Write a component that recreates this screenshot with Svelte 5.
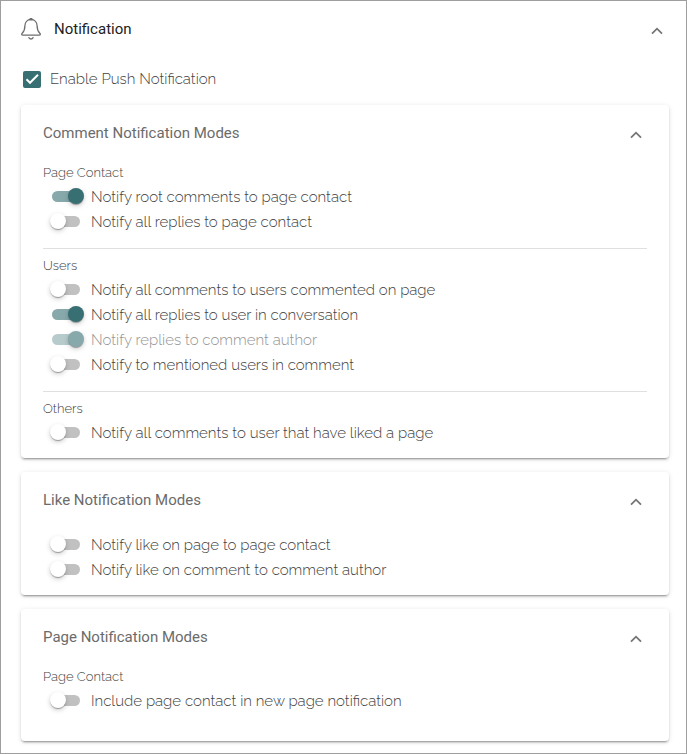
<script>
  let open = $state(true);
  let push = $state(true);

  let panels = $state([
    {
      title: 'Comment Notification Modes',
      open: true,
      groups: [
        {
          label: 'Page Contact',
          options: [
            { text: 'Notify root comments to page contact', on: true },
            { text: 'Notify all replies to page contact', on: false }
          ]
        },
        {
          label: 'Users',
          options: [
            { text: 'Notify all comments to users commented on page', on: false },
            { text: 'Notify all replies to user in conversation', on: true },
            { text: 'Notify replies to comment author', on: true, disabled: true },
            { text: 'Notify to mentioned users in comment', on: false }
          ]
        },
        {
          label: 'Others',
          options: [{ text: 'Notify all comments to user that have liked a page', on: false }]
        }
      ]
    },
    {
      title: 'Like Notification Modes',
      open: true,
      groups: [
        {
          options: [
            { text: 'Notify like on page to page contact', on: false },
            { text: 'Notify like on comment to comment author', on: false }
          ]
        }
      ]
    },
    {
      title: 'Page Notification Modes',
      open: true,
      roomy: true,
      groups: [
        {
          label: 'Page Contact',
          options: [{ text: 'Include page contact in new page notification', on: false }]
        }
      ]
    }
  ]);
</script>

{#snippet chevron(up)}
  <svg class="chevron" class:down={!up} width="12" height="8" viewBox="0 0 12 8" aria-hidden="true">
    <path d="M1 6.7 6 1.7l5 5" fill="none" stroke="#757575" stroke-width="1.8" />
  </svg>
{/snippet}

<main class="settings">
  <h1>
    <button class="header main-header" aria-expanded={open} onclick={() => (open = !open)}>
      <svg class="bell" width="20" height="22" viewBox="0 0 20 22" fill="none" stroke="#6e6e6e" stroke-width="1.3" aria-hidden="true">
        <path d="M8.7 1.4a1.4 1.4 0 0 1 2.6 0" />
        <path d="M10 1.500c-3.700 0-6.100 2.800-6.100 6.300 0 3.900-.5 5.500-2.700 7.500-.9.900-.6 1.800.6 1.800h16.400c1.200 0 1.500-.9.600-1.800-2.200-2-2.700-3.600-2.700-7.500 0-3.500-2.400-6.300-6.100-6.300z" stroke-linejoin="round" />
        <path d="M7.700 19.100c.2 1.200 1.100 1.900 2.300 1.900s2.100-.7 2.300-1.900" />
      </svg>
      <span class="title">Notification</span>
      {@render chevron(open)}
    </button>
  </h1>

  {#if open}
    <label class="push">
      <span class="check">
        <input type="checkbox" bind:checked={push} />
        <svg width="18" height="17" viewBox="0 0 18 17" aria-hidden="true">
          <path d="M3.500 8.300 7 11.800l8-8" fill="none" stroke="#fff" stroke-width="2" />
        </svg>
      </span>
      Enable Push Notification
    </label>

    <div class="panels">
      {#each panels as panel}
        <section class="panel">
          <h2>
            <button class="header" aria-expanded={panel.open} onclick={() => (panel.open = !panel.open)}>
              <span class="title">{panel.title}</span>
              {@render chevron(panel.open)}
            </button>
          </h2>
          {#if panel.open}
            <div class="body" class:roomy={panel.roomy}>
              {#each panel.groups as group}
                <div class="group" class:plain={!group.label} role="group" aria-label={group.label}>
                  {#if group.label}<h3>{group.label}</h3>{/if}
                  {#each group.options as option}
                    <label class="option" class:disabled={option.disabled}>
                      <input type="checkbox" role="switch" bind:checked={option.on} disabled={option.disabled} />
                      <span>{option.text}</span>
                    </label>
                  {/each}
                </div>
              {/each}
            </div>
          {/if}
        </section>
      {/each}
    </div>
  {/if}
</main>

<style>
  :global(body) {
    margin: 0;
    background: #fff;
  }

  .settings {
    box-sizing: border-box;
    border: 1px solid #9e9e9e;
    padding-bottom: 12px;
    font-family: Raleway, Lato, 'Open Sans', sans-serif;
    font-size: 15px;
    font-weight: 300;
    color: #424242;
  }

  h1,
  h2,
  h3 {
    margin: 0;
    font-weight: 300;
  }

  .header {
    display: flex;
    align-items: center;
    width: 100%;
    height: 56px;
    padding: 0 27px 0 22px;
    border: 0;
    background: none;
    color: #6b6b6b;
    font: 400 15px/20px Roboto, sans-serif;
    text-align: left;
    cursor: pointer;
  }

  .main-header {
    padding: 0 23px 0 20px;
    color: #212121;
  }

  .bell {
    margin-right: 13px;
  }

  .title {
    flex: 1;
  }

  .chevron {
    margin-top: 4px;
  }

  .chevron.down {
    transform: rotate(180deg);
  }

  .push {
    display: flex;
    align-items: center;
    gap: 9px;
    height: 44px;
    margin: 0 22px 4px;
    cursor: pointer;
  }

  .check {
    display: grid;
  }

  .check input,
  .check svg {
    grid-area: 1 / 1;
  }

  .check input {
    appearance: none;
    width: 18px;
    height: 17px;
    margin: 0;
    border: 2px solid #757575;
    border-radius: 2px;
  }

  .check input:checked {
    border-color: #376f73;
    background: #376f73;
  }

  .check svg {
    pointer-events: none;
  }

  .panels {
    display: flex;
    flex-direction: column;
    gap: 14px;
    margin: 0 17px 0 20px;
  }

  .panel {
    border-radius: 4px;
    background: #fff;
    box-shadow:
      0 3px 1px -2px rgba(0, 0, 0, 0.2),
      0 2px 2px 0 rgba(0, 0, 0, 0.14),
      0 1px 5px 0 rgba(0, 0, 0, 0.12);
  }

  .body {
    padding: 0 22px 13px;
  }

  .roomy {
    padding-bottom: 28px;
  }

  .group + .group {
    margin-top: 14px;
    padding-top: 5px;
    border-top: 1px solid #e0e0e0;
  }

  .plain {
    padding-top: 4px;
  }

  h3 {
    font-size: 13px;
    line-height: 23px;
  }

  .option {
    display: flex;
    align-items: center;
    gap: 11px;
    height: 25px;
    padding-left: 9px;
    cursor: pointer;
  }

  .option input {
    appearance: none;
    display: flex;
    align-items: center;
    flex: none;
    width: 28px;
    height: 11px;
    margin: 0 0 1px;
    border-radius: 6px;
    background: #c1c1c1;
  }

  .option input::before {
    content: '';
    flex: none;
    width: 16px;
    height: 16px;
    margin-left: -2px;
    border-radius: 50%;
    background: #fff;
    box-shadow:
      0 2px 1px -1px rgba(0, 0, 0, 0.2),
      0 1px 1px 0 rgba(0, 0, 0, 0.14),
      0 2px 5px 0 rgba(0, 0, 0, 0.2);
  }

  .option input:checked {
    background: #87a9ab;
  }

  .option input:checked::before {
    margin-left: 16px;
    background: #376f73;
  }

  .disabled {
    color: #949494;
    cursor: default;
  }

  .option input:disabled:checked {
    background: #b7cbcc;
  }

  .option input:disabled:checked::before {
    background: #87a9ab;
  }
</style>
